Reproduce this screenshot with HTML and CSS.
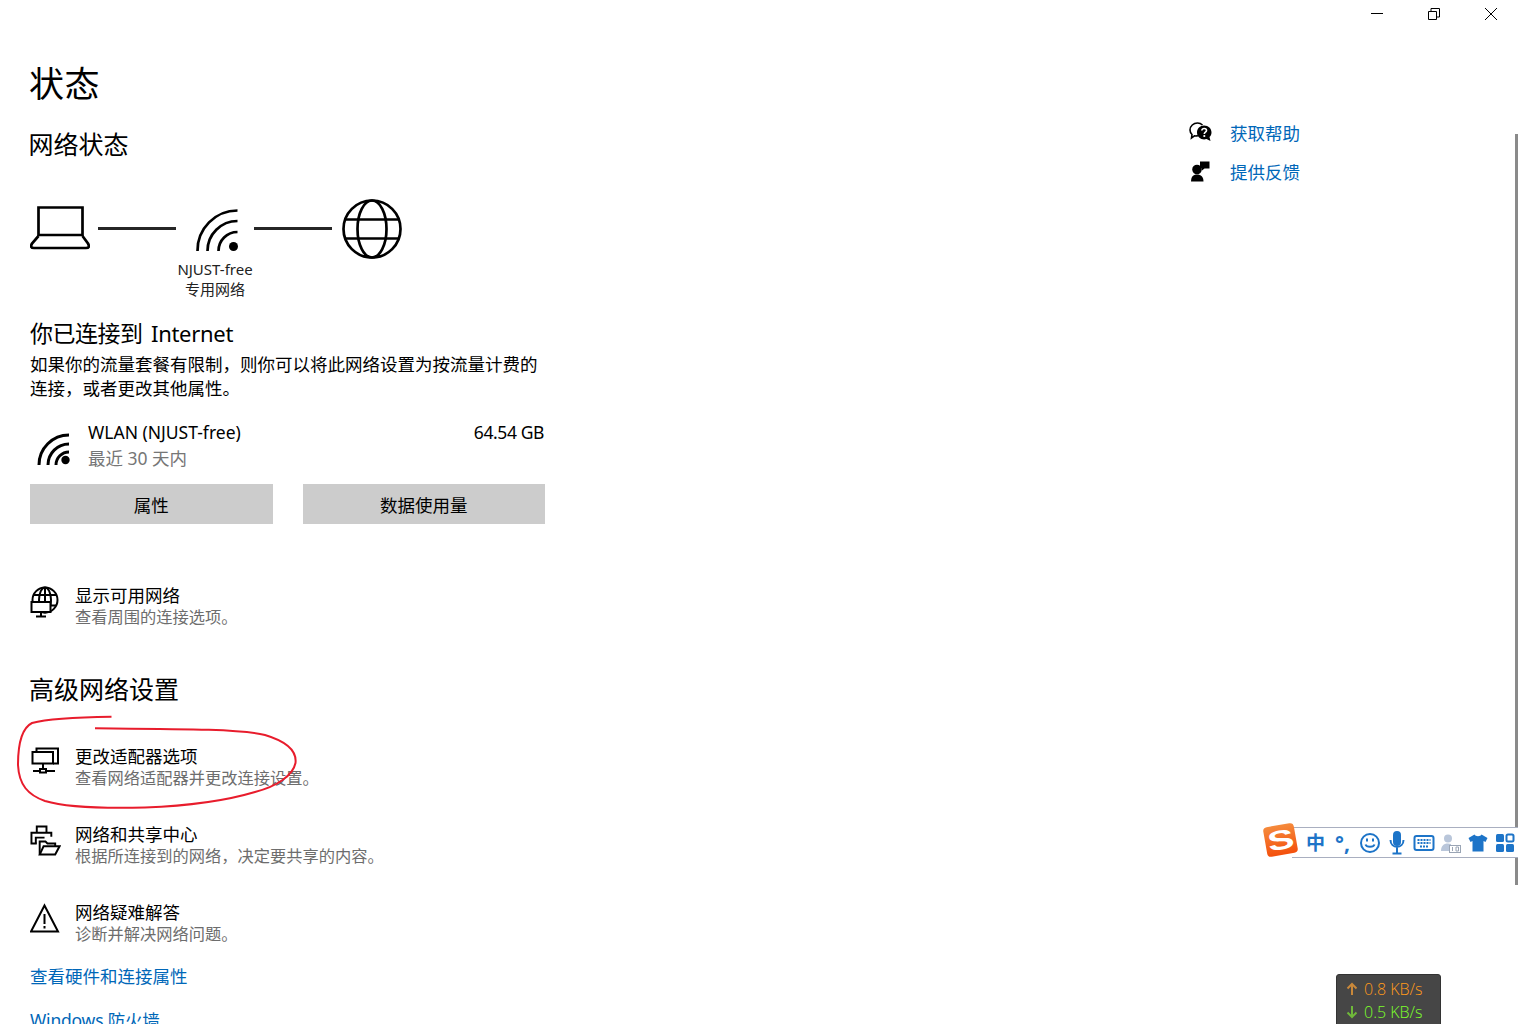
FILE: index.html
```html
<!DOCTYPE html>
<html lang="zh-CN">
<head>
  <meta charset="UTF-8">
  <meta name="viewport" content="width=device-width, initial-scale=1">
  <title>状态</title>
  <link rel="stylesheet" href="styles.css">
</head>
<body>
  <div class="window">
    <div class="titlebar">
      <div class="win-btn">
        <svg width="12" height="12" viewBox="0 0 12 12"><path d="M0 5.5H12" class="ln"/></svg>
      </div>
      <div class="win-btn">
        <svg width="12" height="12" viewBox="0 0 12 12"><path d="M0.5 3.5H8.5V11.5H0.5ZM3 3.5V0.5H11.5V9H8.5" class="ln"/></svg>
      </div>
      <div class="win-btn">
        <svg width="12" height="12" viewBox="0 0 12 12"><path d="M0 0L12 12M12 0L0 12" class="ln"/></svg>
      </div>
    </div>

    <div class="content">
      <div class="main">
        <h1>状态</h1>
        <h2 class="net-title">网络状态</h2>

        <div class="diagram">
          <svg width="60" height="60" viewBox="0 0 60 60" class="stroke-icon">
            <path d="M8.5 36V8.5H52.5V36Z"/>
            <path d="M8.5 37L2 44.5Q-0.5 49 4 49H56Q60.5 49 58 44.5L52.5 37"/>
          </svg>
          <div class="link-line"></div>
          <svg width="78" height="60" viewBox="0 0 78 60" class="stroke-icon">
            <path d="M21.5 52A40 40 0 0 1 61.5 11.5"/>
            <path d="M31.5 52A30 30 0 0 1 61.5 22"/>
            <path d="M42.5 52A19 19 0 0 1 61.5 33"/>
            <circle cx="57.5" cy="47.5" r="4.5" class="solid"/>
          </svg>
          <div class="link-line"></div>
          <svg width="60" height="60" viewBox="0 0 60 60" class="stroke-icon globe">
            <circle cx="30" cy="30" r="28.5"/>
            <ellipse cx="30" cy="30" rx="14.5" ry="28.5"/>
            <path d="M4 20.5H56M4 39.5H56"/>
          </svg>
          <div class="caption">NJUST-free<br>专用网络</div>
        </div>

        <h2 class="connected">你已连接到 <span class="en">Internet</span></h2>
        <p class="note">如果你的流量套餐有限制，则你可以将此网络设置为按流量计费的<br>连接，或者更改其他属性。</p>

        <div class="usage">
          <div class="usage-icon">
            <svg width="36" height="36" viewBox="0 0 36 36" class="stroke-icon thick">
              <path d="M3 35A30 30 0 0 1 33 5"/>
              <path d="M12 35A21 21 0 0 1 33 14"/>
              <path d="M20 35A13 13 0 0 1 33 22"/>
              <circle cx="29.5" cy="30" r="4.2" class="solid"/>
            </svg>
          </div>
          <div class="usage-text">
            <div class="usage-line">
              <span>WLAN (NJUST-free)</span>
              <span class="usage-size">64.54 GB</span>
            </div>
            <div class="usage-sub">最近 30 天内</div>
          </div>
        </div>

        <div class="buttons">
          <div class="btn">属性</div>
          <div class="btn">数据使用量</div>
        </div>

        <div class="row row-first">
          <div class="row-icon">
            <svg width="32" height="32" viewBox="0 0 32 32" class="thin-icon">
              <circle cx="15" cy="14" r="12.500"/>
              <ellipse cx="15" cy="14" rx="6" ry="12.500"/>
              <path d="M4 9H26M15 2V16M21 19.500H26"/>
              <path d="M1.500 16H20.500V26H1.500Z" class="fill-white"/>
              <path d="M11 26V30M6 30.500H16"/>
            </svg>
          </div>
          <div>
            <div class="row-title">显示可用网络</div>
            <div class="row-sub">查看周围的连接选项。</div>
          </div>
        </div>

        <h2 class="advanced">高级网络设置</h2>

        <div class="row row-adapter">
          <div class="row-icon">
            <svg width="32" height="32" viewBox="0 0 32 32" class="thin-icon">
              <path d="M6.500 5V1.500H28V16.500H23"/>
              <path d="M2.500 5H23V16.500H2.500Z"/>
              <path d="M13 16.500V22"/>
              <path d="M10 22H16V25.500H10ZM3 24H10M16 24H25"/>
            </svg>
          </div>
          <div>
            <div class="row-title">更改适配器选项</div>
            <div class="row-sub">查看网络适配器并更改连接设置。</div>
          </div>
        </div>

        <div class="row">
          <div class="row-icon">
            <svg width="31" height="31" viewBox="0 0 32 32" class="thin-icon">
              <path d="M7 8V1.500H17V8"/>
              <path d="M7 19H1.500V8H22V12"/>
              <path d="M6 19V13H15"/>
              <path d="M10 30.500V17H16L18 19H26V22"/>
              <path d="M10 30.500L14 22H30.500L26 30.500Z"/>
            </svg>
          </div>
          <div>
            <div class="row-title">网络和共享中心</div>
            <div class="row-sub">根据所连接到的网络，决定要共享的内容。</div>
          </div>
        </div>

        <div class="row">
          <div class="row-icon">
            <svg width="32" height="32" viewBox="0 0 32 32" class="thin-icon">
              <path d="M14.500 2.500L28 28.500H1Z"/>
              <path d="M14.500 11V21M14.500 23V25.500"/>
            </svg>
          </div>
          <div>
            <div class="row-title">网络疑难解答</div>
            <div class="row-sub">诊断并解决网络问题。</div>
          </div>
        </div>

        <a class="link link-first">查看硬件和连接属性</a>
        <a class="link link-next">Windows 防火墙</a>
      </div>

      <div class="side">
        <div class="side-item">
          <svg width="24" height="24" viewBox="0 0 24 24" class="side-icon">
            <path d="M9 14.500C8 15 6.500 15 5.500 14.800L2.500 17L3 13.500C1.500 12 1 10.500 1 9C1 5 4.500 2 8.500 2C10.500 2 12.500 3 13.500 4" class="open"/>
            <path d="M15 4.500C19.500 4.500 22.500 7.500 22.500 11.500C22.500 13.500 21.500 15 20.500 16L21.500 20L17.500 18C13 19.500 8 16.500 8 11.500C8 7.500 11 4.500 15 4.500Z"/>
            <path d="M12.800 9.500C13 8.200 14 7.500 15.200 7.500C16.500 7.500 17.500 8.300 17.500 9.500C17.500 11.200 15.300 11.200 15.300 13" class="mark"/>
            <circle cx="15.300" cy="15" r="1.100" class="dot"/>
          </svg>
          <a class="side-link">获取帮助</a>
        </div>
        <div class="side-item">
          <svg width="24" height="24" viewBox="0 0 24 24" class="side-icon">
            <path d="M11 1.500H20.500V8.500H15.500L13 10.500V8.500H11Z"/>
            <circle cx="8" cy="9.500" r="4.800"/>
            <path d="M2 21.500C2 17 4 14.500 8 14.500C12 14.500 14.500 17 14.500 21.500Z"/>
          </svg>
          <a class="side-link">提供反馈</a>
        </div>
      </div>
    </div>

    <!-- red circle drawn over the page -->
    <svg class="scribble" width="320" height="120" viewBox="0 700 320 120">
      <path d="M111.500 716.700C85 717 50 718 32 723C22 728 18 745 18 765C19 785 28 795 45 801C65 807 105 808.500 145 807.500C185 806 225 801 255 792C278 786 293 775 295.500 763C297 750 285 741 265 735C240 729 180 729 95 728.300"/>
    </svg>

    <div class="scrollbar"></div>

    <div class="ime">
      <div class="ime-logo"><span>S</span></div>
      <div class="ime-item ime-zh">中</div>
      <div class="ime-item ime-punct">°,</div>
      <div class="ime-item">
        <svg width="22" height="22" viewBox="0 0 22 22" class="ime-line">
          <circle cx="11" cy="11" r="9"/>
          <path d="M6.500 12.500C7.500 15.500 14.500 15.500 15.500 12.500"/>
          <path d="M8 6.500V9.500M14 6.500V9.500"/>
        </svg>
      </div>
      <div class="ime-item">
        <svg width="22" height="24" viewBox="0 0 22 24" class="ime-line">
          <rect x="8" y="1" width="6" height="13" rx="3" class="ime-fill"/>
          <path d="M4.500 9C4.500 18 17.500 18 17.500 9M11 16V22M6.500 22.500H15.500"/>
        </svg>
      </div>
      <div class="ime-item">
        <svg width="22" height="18" viewBox="0 0 22 18" class="ime-line">
          <rect x="1.500" y="2" width="19" height="14" rx="2"/>
          <path d="M4.500 6H17.500M4.500 9H17.500M7 12.500H15" class="ime-dash"/>
        </svg>
      </div>
      <div class="ime-item">
        <svg width="22" height="22" viewBox="0 0 22 22" class="ime-user">
          <circle cx="8" cy="6.500" r="4"/>
          <path d="M1 19C1 14 3.500 11.500 8 11.500C9 11.500 10 11.700 11 12V19Z"/>
          <rect x="9.500" y="13.500" width="11" height="7" class="ime-tag"/>
          <path d="M12.500 15V19M16 15H18.500V19H16Z" class="ime-tag-text"/>
        </svg>
      </div>
      <div class="ime-item">
        <svg width="20" height="20" viewBox="0 0 20 20" class="ime-solid">
          <path d="M6.500 1.500L0.500 5L2.500 9L4.500 8V18.500H15.500V8L17.500 9L19.500 5L13.500 1.500C12.500 3.800 7.500 3.800 6.500 1.500Z"/>
        </svg>
      </div>
      <div class="ime-item">
        <svg width="20" height="20" viewBox="0 0 20 20" class="ime-solid">
          <rect x="1" y="1" width="8" height="8" rx="1.500"/>
          <rect x="11.500" y="1.500" width="7" height="7" rx="1.500" class="ime-open"/>
          <rect x="1" y="11" width="8" height="8" rx="1.500"/>
          <rect x="11" y="11" width="8" height="8" rx="1.500"/>
        </svg>
      </div>
    </div>

    <div class="speed">
      <div class="speed-row up">
        <svg width="12" height="14" viewBox="0 0 12 14"><path d="M6 13V2M1.500 6.500L6 2L10.500 6.500"/></svg>
        <span>0.8 KB/s</span>
      </div>
      <div class="speed-row down">
        <svg width="12" height="14" viewBox="0 0 12 14"><path d="M6 1V12M1.500 7.500L6 12L10.500 7.500"/></svg>
        <span>0.5 KB/s</span>
      </div>
    </div>
  </div>
</body>
</html>
```

FILE: styles.css
```css
html, body {
  margin: 0;
  padding: 0;
  background: #ffffff;
}

body {
  color: #000000;
  font-family: "Noto Sans", "Noto Sans CJK SC", sans-serif;
  font-size: 17.5px;
}

.window {
  position: relative;
  height: 1024px;
  overflow: hidden;
}

.titlebar {
  display: flex;
  justify-content: flex-end;
  height: 28px;
  padding-right: 1px;
}

.win-btn {
  display: flex;
  align-items: center;
  justify-content: center;
  width: 57px;
}

.ln {
  fill: none;
  stroke: #000000;
  stroke-width: 1;
}

.content {
  display: flex;
}

.main {
  width: 515px;
  padding-left: 30px;
}

h1 {
  margin: 33px 0 0 -1px;
  font-size: 35px;
  font-weight: 400;
  line-height: 46px;
  letter-spacing: 0.5px;
}

h2 {
  margin: 0;
  font-size: 25px;
  font-weight: 400;
  line-height: 32px;
}

.net-title {
  margin-top: 21px;
  margin-left: -1.5px;
}

.diagram {
  display: grid;
  grid-template-columns: 68px 78px 78px 78px 60px;
  grid-template-rows: 60px auto;
  align-items: center;
  margin-top: 39px;
}

.stroke-icon {
  display: block;
  fill: none;
  stroke: #000000;
  stroke-width: 2.7;
}

.stroke-icon .solid {
  fill: #000000;
  stroke: none;
}

.stroke-icon.thick {
  stroke-width: 3;
}

.link-line {
  height: 3px;
  margin-top: -1px;
  background: #262626;
}

.globe {
  margin-left: 10px;
}

.caption {
  grid-column: 2 / 5;
  font-size: 15px;
  line-height: 20px;
  text-align: center;
  color: #222222;
}

.connected {
  margin-top: 18px;
  font-size: 23px;
  letter-spacing: -0.5px;
}

.en {
  margin-left: 3px;
  font-size: 22px;
  letter-spacing: -0.3px;
}

.note {
  margin: 3px 0 0;
  line-height: 24px;
  white-space: nowrap;
}

.usage {
  display: flex;
  margin-top: 19px;
}

.usage-icon {
  display: flex;
  align-items: center;
  width: 58px;
  padding-top: 5px;
  padding-left: 6px;
  box-sizing: border-box;
}

.usage-text {
  flex: 1;
}

.usage-line {
  display: flex;
  justify-content: space-between;
  line-height: 26px;
}

.usage-size {
  margin-right: 1px;
  letter-spacing: -0.4px;
}

.usage-sub {
  line-height: 26px;
  color: #767676;
}

.buttons {
  display: grid;
  grid-template-columns: 1fr 1fr;
  gap: 30px;
  margin-top: 13px;
}

.btn {
  height: 40px;
  line-height: 42px;
  text-align: center;
  background: #cccccc;
}

.row {
  display: flex;
  margin-top: 34px;
}

.row-first {
  margin-top: 60px;
}

.row-adapter {
  margin-top: 40px;
}

.row-icon {
  width: 45px;
  padding-top: 2px;
}

.thin-icon {
  display: block;
  fill: none;
  stroke: #000000;
  stroke-width: 2;
}

.thin-icon .fill-white {
  fill: #ffffff;
}

.row-title {
  line-height: 22px;
}

.row-sub {
  font-size: 16.25px;
  line-height: 22px;
  color: #6d6d6d;
}

.advanced {
  margin-top: 45px;
  margin-left: -1px;
}

.link {
  display: block;
  line-height: 24px;
  color: #0067b8;
}

.link-first {
  margin-top: 19px;
}

.link-next {
  margin-top: 20px;
  letter-spacing: -0.2px;
}

.side {
  display: flex;
  flex-direction: column;
  gap: 15px;
  margin-left: 644px;
  padding-top: 93px;
}

.side-item {
  display: flex;
  align-items: center;
  height: 24px;
}

.side-icon {
  width: 24px;
  margin-right: 17px;
  fill: #000000;
  stroke: none;
}

.side-icon .open {
  fill: none;
  stroke: #000000;
  stroke-width: 1.6;
}

.side-icon .mark {
  fill: none;
  stroke: #ffffff;
  stroke-width: 1.6;
}

.side-icon .dot {
  fill: #ffffff;
}

.side-link {
  line-height: 24px;
  color: #0067b8;
}

/* things lying over the page */
.scribble {
  position: absolute;
  left: 0;
  top: 700px;
  fill: none;
  stroke: #e81c2c;
  stroke-width: 2;
}

.scrollbar {
  position: absolute;
  left: 1515px;
  top: 134px;
  width: 3px;
  height: 751px;
  background: #8a8a8a;
}

.ime {
  position: absolute;
  left: 1292px;
  right: 2px;
  top: 827px;
  height: 29px;
  display: flex;
  align-items: center;
  padding-left: 10px;
  background: #ffffff;
  border-top: 1px solid #a9afc0;
  border-bottom: 1px solid #a9afc0;
}

.ime-logo {
  position: absolute;
  left: -27px;
  top: -3px;
  display: flex;
  align-items: center;
  justify-content: center;
  width: 31px;
  height: 30px;
  overflow: hidden;
  border-radius: 4px;
  background: linear-gradient(#f58a3c, #f4500c);
  transform: rotate(-10deg);
  color: #ffffff;
  font-family: "Liberation Sans", sans-serif;
  font-size: 32px;
  font-weight: 700;
  line-height: 30px;
}

.ime-logo span {
  display: block;
  transform: scale(1.25, 0.85);
}

.ime-item {
  display: flex;
  align-items: center;
  justify-content: center;
  flex: none;
  width: 27px;
  color: #1d74c8;
}

.ime-zh {
  font-size: 19px;
  font-weight: 700;
  line-height: 24px;
}

.ime-punct {
  font-size: 21px;
  font-weight: 700;
  line-height: 24px;
}

.ime-line {
  fill: none;
  stroke: #1d74c8;
  stroke-width: 2;
}

.ime-line .ime-fill {
  fill: #1d74c8;
}

.ime-dash {
  stroke-dasharray: 2 1;
  stroke-width: 2;
}

.ime-user {
  fill: #b9c6da;
  stroke: none;
}

.ime-user .ime-tag {
  fill: #ffffff;
  stroke: #9aa5b5;
  stroke-width: 1;
}

.ime-user .ime-tag-text {
  fill: none;
  stroke: #9aa5b5;
  stroke-width: 1;
}

.ime-solid {
  fill: #1d74c8;
}

.ime-solid .ime-open {
  fill: none;
  stroke: #1d74c8;
  stroke-width: 2;
}

.speed {
  position: absolute;
  left: 1336px;
  top: 974px;
  width: 105px;
  height: 60px;
  box-sizing: border-box;
  padding: 2px 0 0 9px;
  background: #464646;
  border: 1px solid #333333;
  border-radius: 3px;
  font-family: "Open Sans", sans-serif;
  font-size: 16px;
  font-weight: 300;
}

.speed-row {
  display: flex;
  align-items: center;
  gap: 6px;
  height: 23px;
}

.speed-row svg {
  fill: none;
  stroke-width: 2;
}

.up {
  color: #ff9a1a;
}

.up svg {
  stroke: #c9883a;
}

.down {
  color: #7dff2a;
}

.down svg {
  stroke: #6fb83a;
}
```
